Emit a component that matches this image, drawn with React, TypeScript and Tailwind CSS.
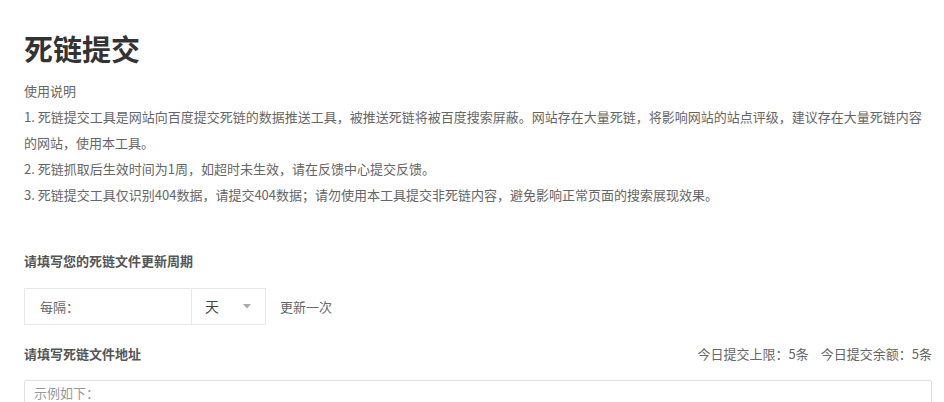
export default function App() {
  return (
    <div
      className="h-[402px] w-[944px] overflow-hidden bg-white pl-6 pr-3 pt-[28px] text-[13px] text-[#666]"
      style={{ fontFamily: '"Noto Sans CJK SC", "Noto Sans", sans-serif' }}
    >
      <h1 className="text-[29px] font-bold leading-[41px] text-[#333]">死链提交</h1>

      <div className="mt-[9px] leading-[26px]">
        <p>使用说明</p>
        <p>
          1. 死链提交工具是网站向百度提交死链的数据推送工具，被推送死链将被百度搜索屏蔽。网站存在大量死链，将影响网站的站点评级，建议存在大量死链内容的网站，使用本工具。
        </p>
        <p>2. 死链抓取后生效时间为1周，如超时未生效，请在反馈中心提交反馈。</p>
        <p>3. 死链提交工具仅识别404数据，请提交404数据；请勿使用本工具提交非死链内容，避免影响正常页面的搜索展现效果。</p>
      </div>

      <div className="mt-[40px] font-bold leading-[26px] text-[#555]">请填写您的死链文件更新周期</div>

      <div className="mt-[14px] flex items-center">
        <div className="flex h-[37px] border border-[#e8e8e8]">
          <div className="flex w-[167px] items-center border-r border-[#e8e8e8] pl-[15px]">每隔：</div>
          <div className="flex w-[73px] items-center justify-between pl-[13px] pr-[14px]">
            <span className="text-[14px] text-[#444]">天</span>
            <svg width="8" height="5" viewBox="0 0 8 5">
              <path d="M0 0h8L4 4.5z" fill="#aaa" />
            </svg>
          </div>
        </div>
        <span className="ml-[14px]">更新一次</span>
      </div>

      <div className="mt-[16px] flex items-center justify-between leading-[26px]">
        <span className="font-bold text-[#555]">请填写死链文件地址</span>
        <span>
          今日提交上限：5条<span className="ml-[12px]">今日提交余额：5条</span>
        </span>
      </div>

      <div className="mt-[13px] h-[60px] rounded-t-[2px] border border-[#e0e0e0] pl-[9px] pt-[2px] leading-[20px] text-[#999]">
        示例如下：
      </div>
    </div>
  );
}
